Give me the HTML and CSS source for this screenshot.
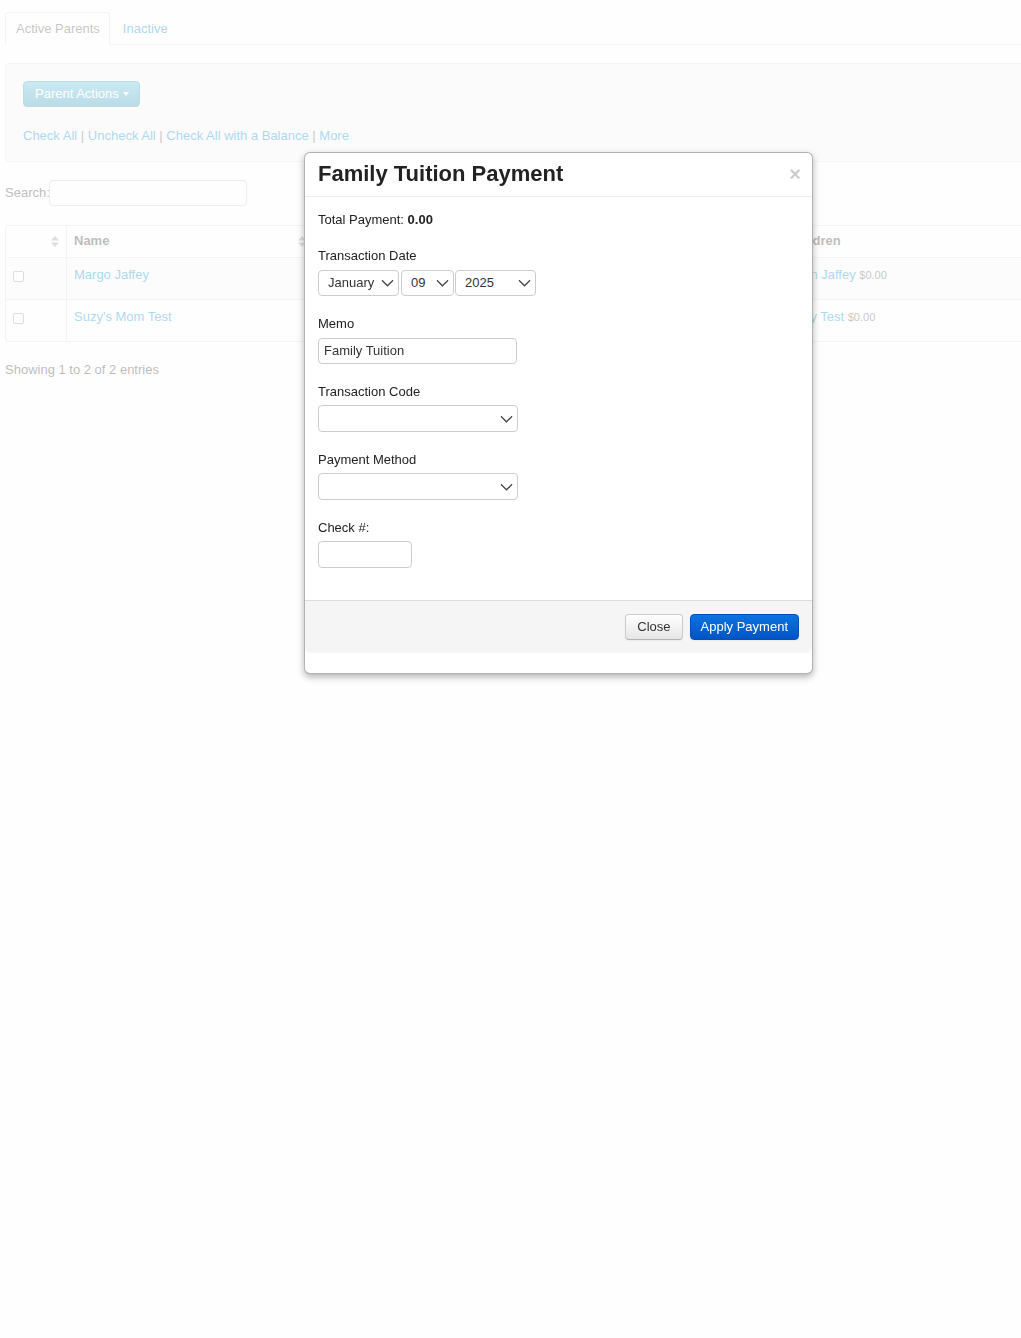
FILE: index.html
```html
<!DOCTYPE html>
<html>
<head>
<meta charset="utf-8">
<title>Parents</title>
<link rel="stylesheet" href="styles.css">
</head>
<body>
<div class="page">
	<!--tabs-->
	<ul class="nav-tabs">
		<li class="active"><a href="#">Active Parents</a></li>
		<li><a href="#">Inactive</a></li>
	</ul>

	<!--actions-->
	<div class="well">
		<a href="#" class="btn-info">Parent Actions <span class="caret"></span></a>
		<div class="check-links">
			<a href="#">Check All</a> | <a href="#">Uncheck All</a> | <a href="#">Check All with a Balance</a> | <a href="#">More</a>
		</div>
	</div>

	<div class="search">
		<label>Search:</label>
		<span class="search-box"></span>
	</div>

	<!--parents table-->
	<table class="grid">
		<thead>
			<tr>
				<th class="col-check"><span class="th-in"><span></span><svg class="sort" viewBox="0 0 8 11"><polygon points="0,4.5 4,0 8,4.5"/><polygon points="0,6.5 4,11 8,6.5"/></svg></span></th>
				<th class="col-name"><span class="th-in">Name<svg class="sort" viewBox="0 0 8 11"><polygon points="0,4.5 4,0 8,4.5"/><polygon points="0,6.5 4,11 8,6.5"/></svg></span></th>
				<th class="col-mid"></th>
				<th>Children</th>
			</tr>
		</thead>
		<tbody>
			<tr class="odd">
				<td><span class="cbox"></span></td>
				<td><a href="#">Margo Jaffey</a></td>
				<td></td>
				<td><a href="#">Evan Jaffey</a> <small>$0.00</small></td>
			</tr>
			<tr>
				<td><span class="cbox"></span></td>
				<td><a href="#">Suzy's Mom Test</a></td>
				<td></td>
				<td><a href="#">Suzy Test</a> <small>$0.00</small></td>
			</tr>
		</tbody>
	</table>
	<div class="info">Showing 1 to 2 of 2 entries</div>
</div>

<div class="backdrop"></div>

<!--payment modal-->
<div class="modal">
	<div class="modal-header">
		<h3>Family Tuition Payment</h3>
		<span class="close">&times;</span>
	</div>
	<div class="modal-body">
		<div class="group total">Total Payment: <b>0.00</b></div>
		<div class="group">
			<label>Transaction Date</label>
			<div class="date-row">
				<div class="select w-month"><span>January</span><svg viewBox="0 0 14 8"><polyline points="1,1 7,7 13,1"/></svg></div>
				<div class="select w-day"><span>09</span><svg viewBox="0 0 14 8"><polyline points="1,1 7,7 13,1"/></svg></div>
				<div class="select w-year"><span>2025</span><svg viewBox="0 0 14 8"><polyline points="1,1 7,7 13,1"/></svg></div>
			</div>
		</div>
		<div class="group">
			<label>Memo</label>
			<div class="input w-memo">Family Tuition</div>
		</div>
		<div class="group tight">
			<label>Transaction Code</label>
			<div class="select w-wide"><span></span><svg viewBox="0 0 14 8"><polyline points="1,1 7,7 13,1"/></svg></div>
		</div>
		<div class="group tight">
			<label>Payment Method</label>
			<div class="select w-wide"><span></span><svg viewBox="0 0 14 8"><polyline points="1,1 7,7 13,1"/></svg></div>
		</div>
		<div class="group tight last">
			<label>Check #:</label>
			<div class="input w-check"></div>
		</div>
	</div>
	<div class="modal-footer">
		<a href="#" class="btn">Close</a>
		<a href="#" class="btn btn-primary">Apply Payment</a>
	</div>
</div>
</body>
</html>
```

FILE: styles.css
```css
html,body{margin:0;padding:0;}
body{background:#fff;font:13px/18px "Liberation Sans",Arial,sans-serif;color:#333;overflow:hidden;height:1338px;}
a{color:#08c;text-decoration:none;}
ul{margin:0;padding:0;list-style:none;}
/*layout*/
.page{width:1060px;padding-left:5px;}
/*tabs*/
.nav-tabs{display:flex;padding-top:12px;border-bottom:1px solid #ddd;}
	.nav-tabs li{margin-bottom:-1px;margin-right:1px;}
	.nav-tabs a{display:block;padding:7px 11px;line-height:17px;border:1px solid transparent;border-radius:4px 4px 0 0;}
	.nav-tabs .active a{color:#555;background:#fff;border-color:#ddd #ddd transparent;padding:7px 9px 7px 10px;}
/*well*/
.well{margin-top:18px;background:#f5f5f5;border:1px solid #e3e3e3;border-radius:4px;padding:17px 17px 17px;}
	.btn-info{display:inline-flex;align-items:center;height:26px;padding:0 10px 0 11px;color:#fff;border-radius:4px;background:linear-gradient(#5bc0de,#2f96b4);border:1px solid #2f96b4;box-sizing:border-box;}
	.caret{display:inline-block;margin-left:4px;border-top:4px solid #fff;border-left:3px solid transparent;border-right:3px solid transparent;}
	.check-links{margin-top:20px;color:#555;line-height:17px;}
/*search*/
.search{display:flex;align-items:center;margin-top:18px;}
	.search label{width:44px;}
	.search-box{display:block;width:198px;height:26px;border:1px solid #ccc;border-radius:4px;box-sizing:border-box;}
/*table*/
.grid{margin-top:19px;width:1060px;border:1px solid #ddd;border-radius:4px;border-collapse:separate;border-spacing:0;}
	.grid th{text-align:left;padding:6px 7px 7px 7px;font-weight:bold;line-height:18px;border-left:1px solid #ddd;}
	.grid th:first-child,.grid td:first-child{border-left:0;}
	.grid td{padding:8px 7px 15px 7px;border-top:1px solid #ddd;border-left:1px solid #ddd;vertical-align:top;}
	.grid tr.odd td{background:#f9f9f9;}
	.col-check{width:46px;}
	.col-name{width:232px;}
	.col-mid{width:452px;}
	.th-in{display:flex;justify-content:space-between;align-items:center;}
	.sort{width:8px;height:11px;fill:#999;}
	.cbox{display:block;width:11px;height:11px;margin:5px 0 0 0;border:1px solid #999;border-radius:2px;background:#fff;box-sizing:border-box;}
	.grid small{font-size:11px;color:#555;}
.info{margin-top:19px;}
/*backdrop*/
.backdrop{position:fixed;left:0;top:0;right:0;bottom:0;background:rgb(253,253,253);opacity:.68;}
/*modal*/
.modal{position:absolute;left:304px;top:152px;width:509px;box-sizing:border-box;background:#fff;border:1px solid rgba(0,0,0,.3);border-radius:6px;box-shadow:0 3px 7px rgba(0,0,0,.3);padding-bottom:20px;color:#222;}
	.modal-header{display:flex;justify-content:space-between;align-items:center;padding:8px 14px 9px 13px;border-bottom:1px solid #eee;}
	.modal-header h3{margin:0;font-size:22px;line-height:26px;font-weight:bold;color:#222;}
	.close{font-size:20px;font-weight:bold;color:#000;opacity:.2;line-height:20px;margin-right:-3px;}
	.modal-body{padding:14px 14px 32px 13px;}
	.group{margin-bottom:18px;}
	.group.total{margin-bottom:17px;}
	.group label{display:block;line-height:16px;padding-top:2px;margin-bottom:6px;}
	.group.tight label{margin-bottom:5px;}
	.group.last{margin-bottom:0;}
	.date-row{display:flex;gap:1px;}
	.select,.input{display:flex;align-items:center;justify-content:space-between;height:26px;box-sizing:border-box;border:1px solid #ccc;border-radius:4px;background:#fff;color:#333;}
	.select{padding:0 4px 0 9px;}
	.select svg{width:13px;height:8px;fill:none;stroke:#444;stroke-width:1.3;}
	.input{padding:0 5px;}
	.w-month{width:81px;margin-right:1px;}
	.w-day{width:53px;}
	.w-year{width:81px;}
	.w-memo{width:199px;}
	.w-wide{width:200px;height:27px;}
	.w-check{width:94px;height:27px;}
	.modal-footer{display:flex;justify-content:flex-end;gap:7px;padding:13px 13px 13px;background:#f5f5f5;border-top:1px solid #ddd;border-radius:0 0 6px 6px;}
	.btn{display:inline-flex;align-items:center;height:26px;box-sizing:border-box;padding:0 11px;border:1px solid #ccc;border-bottom-color:#b3b3b3;border-radius:4px;background:linear-gradient(#fff,#e6e6e6);color:#333;box-shadow:0 1px 2px rgba(0,0,0,.05);}
	.btn-primary{color:#fff;background:linear-gradient(#0a74e0,#0054c4);border-color:#0050b8;padding:0 10px;}
```
